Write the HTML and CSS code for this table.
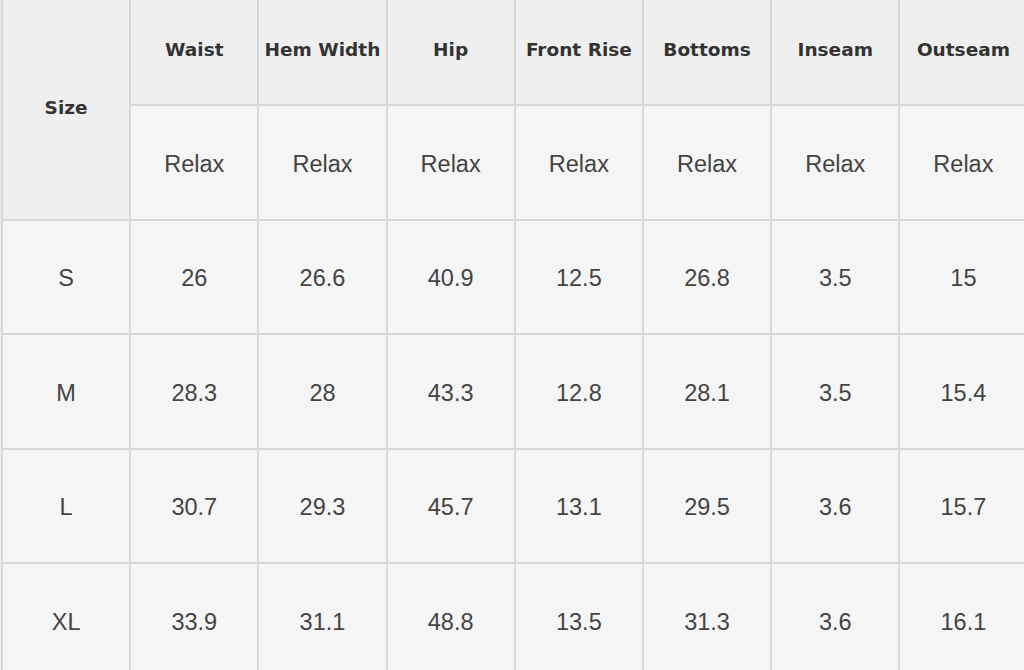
FILE: index.html
```html
<!DOCTYPE html>
<html>
<head>
<meta charset="utf-8">
<link rel="stylesheet" href="styles.css">
</head>
<body>
<div class="frame">
<table class="chart">
  <colgroup>
    <col class="c"><col class="c"><col class="c"><col class="c"><col class="c"><col class="c"><col class="c"><col class="c">
  </colgroup>
  <thead>
    <tr>
      <th rowspan="2" class="size-h">Size</th>
      <th>Waist</th>
      <th>Hem Width</th>
      <th>Hip</th>
      <th>Front Rise</th>
      <th>Bottoms</th>
      <th>Inseam</th>
      <th>Outseam</th>
    </tr>
    <tr class="fit">
      <td>Relax</td><td>Relax</td><td>Relax</td><td>Relax</td><td>Relax</td><td>Relax</td><td>Relax</td>
    </tr>
  </thead>
  <tbody>
    <tr><td>S</td><td>26</td><td>26.6</td><td>40.9</td><td>12.5</td><td>26.8</td><td>3.5</td><td>15</td></tr>
    <tr><td>M</td><td>28.3</td><td>28</td><td>43.3</td><td>12.8</td><td>28.1</td><td>3.5</td><td>15.4</td></tr>
    <tr><td>L</td><td>30.7</td><td>29.3</td><td>45.7</td><td>13.1</td><td>29.5</td><td>3.6</td><td>15.7</td></tr>
    <tr><td>XL</td><td>33.9</td><td>31.1</td><td>48.8</td><td>13.5</td><td>31.3</td><td>3.6</td><td>16.1</td></tr>
  </tbody>
</table>
</div>
</body>
</html>
```

FILE: styles.css
```css
html, body {
  margin: 0;
  padding: 0;
  background: #f4f4f4;
  overflow: hidden;
}
.frame {
  width: 1024px;
  height: 670px;
  overflow: hidden;
  background: #ececec;
}
.chart {
  table-layout: fixed;
  border-collapse: separate;
  border-spacing: 2px;
  background: #d8d8d8;
  width: 1027.4px;
  margin: -10.5px 0 0 1px;
}
.chart col.c {
  width: 126.2px;
}
.chart th,
.chart td {
  padding: 4px 0 0 0;
  height: 108.5px;
  text-align: center;
  vertical-align: middle;
  overflow: hidden;
  white-space: nowrap;
}
.chart th {
  background: #efefef;
  font-family: "DejaVu Sans", Verdana, sans-serif;
  font-weight: bold;
  font-size: 18.5px;
  color: #333333;
  letter-spacing: 0;
}
.chart td {
  background: #f5f5f5;
  font-family: "Liberation Sans", Arial, sans-serif;
  font-size: 23.5px;
  color: #444444;
}
.chart .size-h {
  background: #efefef;
}
```
